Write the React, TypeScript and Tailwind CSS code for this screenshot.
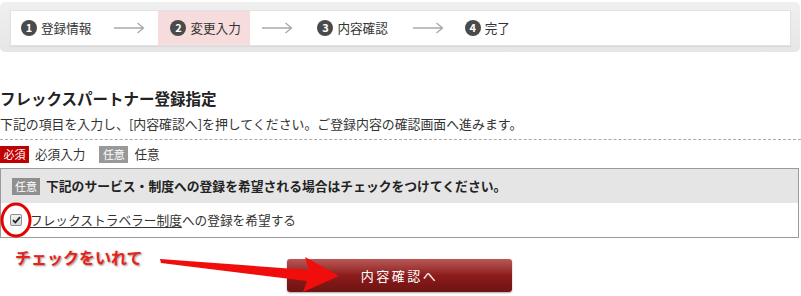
import React from "react";

function StepNum({ n }: { n: number }) {
  return (
    <span className="flex h-[16px] w-[16px] items-center justify-center rounded-full bg-[#4a4a4a] text-[11px] font-bold leading-none text-white">
      {n}
    </span>
  );
}

function Arrow() {
  return (
    <svg width="31" height="12" viewBox="0 0 31 12" className="shrink-0">
      <path d="M0 6 H29.5 M23.5 1 L29.5 6 L23.5 11" stroke="#a9a9a9" strokeWidth="1.3" fill="none" />
    </svg>
  );
}

function Step({ n, label }: { n: number; label: string }) {
  return (
    <div className="flex items-center gap-[4px]">
      <StepNum n={n} />
      <span className="text-[12.6px] text-[#333]">{label}</span>
    </div>
  );
}

export default function App() {
  return (
    <div className="relative h-[296px] w-[801px] overflow-hidden bg-white font-['Noto_Sans_CJK_JP',sans-serif] text-[#333]">
      {/* step bar */}
      <div className="mt-[2px] h-[50px] w-[800px] rounded-[5px] bg-gradient-to-b from-[#f0f0f0] to-[#e6e6e6] pb-[6px] pl-[10px] pr-[9px] pt-[8px]">
        <div className="flex h-[36px] items-stretch border border-[#e2e2e2] bg-white shadow-[0_1px_1px_rgba(0,0,0,0.06)]">
          <div className="flex items-center pl-[10px]">
            <Step n={1} label="登録情報" />
          </div>
          <div className="ml-[23px] flex items-center">
            <Arrow />
          </div>
          <div className="ml-[13px] flex w-[92px] items-center bg-[#f6dcdc] pl-[12px]">
            <Step n={2} label="変更入力" />
          </div>
          <div className="ml-[12px] flex items-center">
            <Arrow />
          </div>
          <div className="ml-[24px] flex items-center">
            <Step n={3} label="内容確認" />
          </div>
          <div className="ml-[25px] flex items-center">
            <Arrow />
          </div>
          <div className="ml-[21px] flex items-center">
            <Step n={4} label="完了" />
          </div>
        </div>
      </div>

      {/* title */}
      <h2 className="mt-[36px] text-[15.5px] font-bold leading-[20px] text-[#222]">
        フレックスパートナー登録指定
      </h2>
      <p className="mt-[7px] border-b border-dashed border-[#aaaaaa] pb-[6px] text-[12.9px] leading-[18px]">
        下記の項目を入力し、[内容確認へ]を押してください。ご登録内容の確認画面へ進みます。
      </p>

      {/* legend */}
      <div className="mt-[5px] flex h-[18px] items-center text-[12.6px]">
        <span className="flex h-[17px] w-[29px] items-center justify-center bg-[#c00000] text-[11px] text-white">
          必須
        </span>
        <span className="ml-[6px]">必須入力</span>
        <span className="ml-[14px] flex h-[17px] w-[29px] items-center justify-center bg-[#999999] text-[11px] text-white">
          任意
        </span>
        <span className="ml-[6px]">任意</span>
      </div>

      {/* box */}
      <div className="mt-[5px] w-[799px] border border-[#9a9a9a]">
        <div className="flex h-[34px] items-center bg-[#e5e5e5] pl-[11px]">
          <span className="flex h-[17px] w-[28px] items-center justify-center bg-[#8f8f8f] text-[11px] text-white">
            任意
          </span>
          <span className="ml-[6px] text-[12.8px] font-bold text-[#222]">
            下記のサービス・制度への登録を希望される場合はチェックをつけてください。
          </span>
        </div>
        <div className="flex h-[34px] items-center bg-white pl-[9px]">
          <span className="flex h-[12px] w-[12px] items-center justify-center rounded-[2px] border border-[#8e8e8e] bg-gradient-to-b from-[#f4f4f4] to-[#d8d8d8]">
            <svg width="9" height="8" viewBox="0 0 9 8">
              <path d="M1 4.2 L3.4 6.5 L8 1.2" stroke="#222" strokeWidth="1.8" fill="none" />
            </svg>
          </span>
          <span className="ml-[8px] text-[12.7px]">
            <span className="underline underline-offset-2">フレックストラベラー制度</span>への登録を希望する
          </span>
        </div>
      </div>

      {/* button */}
      <div className="mt-[21px] flex pl-[287px]">
        <button className="h-[33px] w-[225px] rounded-[3px] bg-gradient-to-b from-[#b85858] via-[#8c1c1c] to-[#701212] text-[13px] tracking-[2.5px] text-white shadow-[0_1px_2px_rgba(0,0,0,0.35)]">
          内容確認へ
        </button>
      </div>

      {/* annotations */}
      <svg className="pointer-events-none absolute left-0 top-0" width="801" height="296">
        <ellipse cx="16" cy="220" rx="14" ry="16" fill="none" stroke="#e60000" strokeWidth="3" />
        <polygon points="160,259 161,263 307,281 303,292 339,276 305,257 309,270" fill="#f20d0d" />
      </svg>
      <div className="absolute left-[15px] top-[247px] text-[16px] font-bold leading-[20px] text-[#e8211a] [text-shadow:1px_1px_2px_rgba(0,0,0,0.45)]">
        チェックをいれて
      </div>
    </div>
  );
}
